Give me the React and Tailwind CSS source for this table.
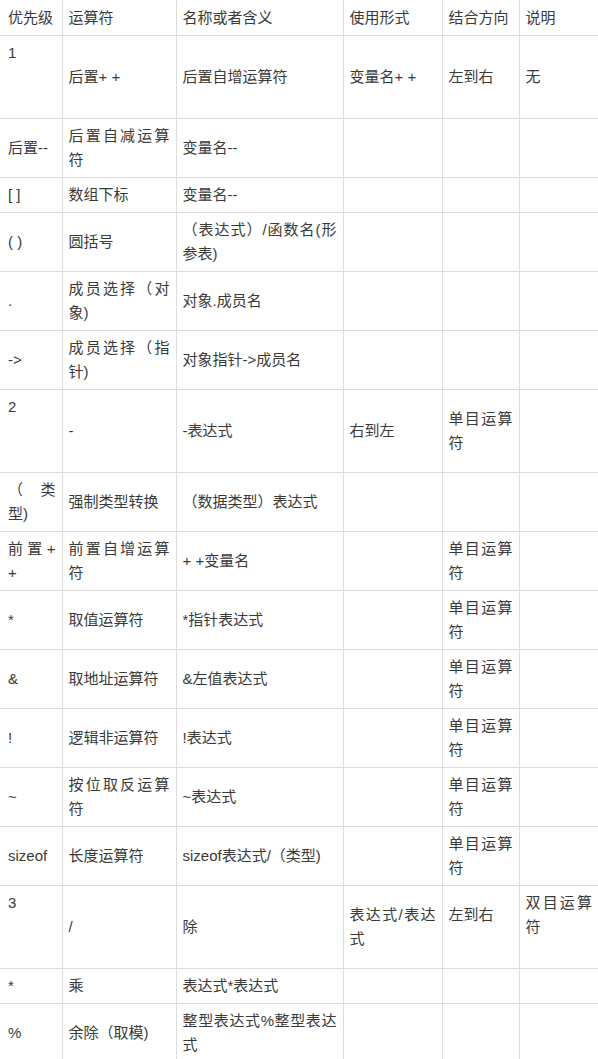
import React from "react";

const rows = [
  [["1", 2], "后置+ +", "后置自增运算符", "变量名+ +", "左到右", "无"],
  ["后置--", "后置自减运算符", "变量名--", "", "", ""],
  ["[ ]", "数组下标", "变量名--", "", "", ""],
  ["( )", "圆括号", "（表达式）/函数名(形参表)", "", "", ""],
  [".", "成员选择（对象)", "对象.成员名", "", "", ""],
  ["->", "成员选择（指针)", "对象指针->成员名", "", "", ""],
  [["2", 2], "-", "-表达式", "右到左", "单目运算符", ""],
  ["（类型)", "强制类型转换", "（数据类型）表达式", "", "", ""],
  ["前置+ +", "前置自增运算符", "+ +变量名", "", "单目运算符", ""],
  ["*", "取值运算符", "*指针表达式", "", "单目运算符", ""],
  ["&", "取地址运算符", "&左值表达式", "", "单目运算符", ""],
  ["!", "逻辑非运算符", "!表达式", "", "单目运算符", ""],
  ["~", "按位取反运算符", "~表达式", "", "单目运算符", ""],
  ["sizeof", "长度运算符", "sizeof表达式/（类型)", "", "单目运算符", ""],
  [["3", 2], "/", "除", "表达式/表达式", ["左到右", 1], ["双目运算符", 1]],
  ["*", "乘", "表达式*表达式", "", "", ""],
  ["%", "余除（取模)", "整型表达式%整型表达式", "", "", ""],
];

const header = ["优先级", "运算符", "名称或者含义", "使用形式", "结合方向", "说明"];

function Cell({ v, first, last, top }) {
  let text = v;
  let blanks = 0;
  if (Array.isArray(v)) {
    text = v[0];
    blanks = v[1];
  }
  const cls =
    "border border-[#dddddd] pb-[5px] align-middle text-justify break-all " +
    (top ? "border-t-0 pt-[6px] " : "pt-[5px] ") +
    (first ? "border-l-0 pl-[8px] pr-[6px] " : "pl-[6px] pr-[6px] ") +
    (last ? "border-r-0 " : "");
  return (
    <td className={cls}>
      <div>{text}</div>
      {Array.from({ length: blanks }).map((_, i) => (
        <div key={i} className="h-[24px]" />
      ))}
    </td>
  );
}

export default function App() {
  return (
    <div className="w-[598px] bg-white overflow-hidden">
      <table
        className="w-[598px] table-fixed border-collapse text-[15px] leading-[24px] text-[#3a3a3a]"
        style={{ fontFamily: '"Liberation Sans", "Noto Sans CJK SC", sans-serif' }}
      >
        <colgroup>
          <col className="w-[62px]" />
          <col className="w-[114px]" />
          <col className="w-[167px]" />
          <col className="w-[99px]" />
          <col className="w-[77px]" />
          <col className="w-[79px]" />
        </colgroup>
        <tbody>
          <tr>
            {header.map((h, i) => (
              <Cell key={i} v={h} first={i === 0} last={i === 5} top />
            ))}
          </tr>
          {rows.map((r, ri) => (
            <tr key={ri}>
              {r.map((c, ci) => (
                <Cell key={ci} v={c} first={ci === 0} last={ci === 5} />
              ))}
            </tr>
          ))}
        </tbody>
      </table>
    </div>
  );
}
